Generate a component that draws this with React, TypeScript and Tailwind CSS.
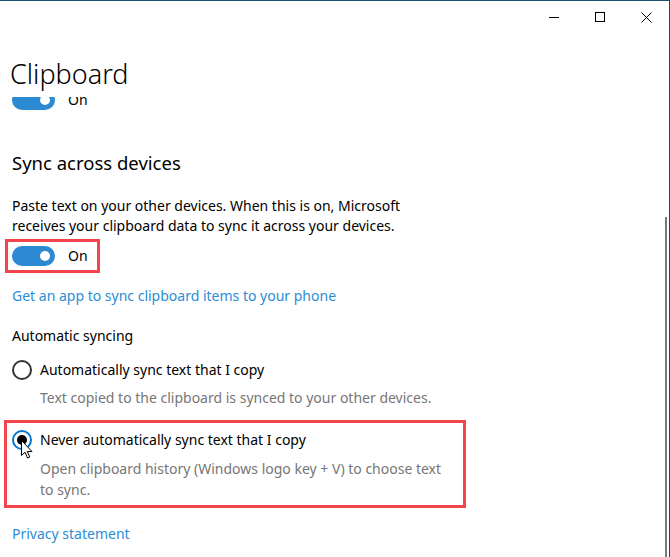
import React from 'react';

const font = { fontFamily: '"Noto Sans", "Open Sans", sans-serif' };

const Toggle = () => (
  <div className="flex h-[20px] items-center">
    <div className="flex h-[20px] w-[43px] items-center justify-end rounded-full bg-[#2b8ad2] pr-[5px]">
      <div className="h-[10px] w-[10px] rounded-full bg-white" />
    </div>
    <span className="ml-[13px] text-[14px] leading-[20px] text-black">On</span>
  </div>
);

const Radio = ({ checked }: { checked?: boolean }) =>
  checked ? (
    <div className="flex h-[20px] w-[20px] shrink-0 items-center justify-center rounded-full border-2 border-[#0078d7]">
      <div className="h-[10px] w-[10px] rounded-full bg-black" />
    </div>
  ) : (
    <div className="h-[20px] w-[20px] shrink-0 rounded-full border-2 border-[#333333]" />
  );

const TitleButtons = () => (
  <div className="flex h-[32px] justify-end">
    <div className="flex w-[46px] items-center justify-center">
      <svg width="10" height="10" viewBox="0 0 10 10">
        <path d="M0 5.5h10" stroke="#000" strokeWidth="1" />
      </svg>
    </div>
    <div className="flex w-[46px] items-center justify-center">
      <svg width="10" height="10" viewBox="0 0 10 10">
        <rect x="0.5" y="0.5" width="9" height="9" fill="none" stroke="#000" strokeWidth="1" />
      </svg>
    </div>
    <div className="flex w-[46px] items-center justify-center">
      <svg width="11" height="11" viewBox="0 0 11 11">
        <path d="M0.5 0.5l10 10M10.5 0.5l-10 10" stroke="#000" strokeWidth="1" />
      </svg>
    </div>
  </div>
);

export default function App() {
  return (
    <div
      className="relative h-[557px] w-[670px] overflow-hidden border-t border-r border-[#1b4f72] bg-white"
      style={font}
    >
      <TitleButtons />

      <div className="h-[64px] pl-[10px] pt-[25px]">
        <h1 className="text-[27px] font-light leading-[32px] text-black">Clipboard</h1>
      </div>

      <div className="h-[460px] overflow-hidden px-[12px]">
        <div className="h-[13px] overflow-hidden">
          <div className="-mt-[7px]">
            <Toggle />
          </div>
        </div>

        <h2 className="mt-[39px] text-[18.5px] leading-[28px] text-black">Sync across devices</h2>

        <p className="mt-[19px] w-[420px] text-[14px] leading-[20px] text-black">
          Paste text on your other devices. When this is on, Microsoft receives your clipboard data to
          sync it across your devices.
        </p>

        <div className="relative mt-[10px] w-fit">
          <Toggle />
          <div className="absolute -left-[7px] -top-[7px] h-[34px] w-[95px] border-[3px] border-[#f2444a]" />
        </div>

        <div className="mt-[20px] text-[14px] leading-[20px] text-[#2b8dd4]">
          Get an app to sync clipboard items to your phone
        </div>

        <div className="mt-[20px] text-[14px] leading-[20px] text-black">Automatic syncing</div>

        <div className="mt-[14px] flex items-center gap-[8px]">
          <Radio />
          <span className="text-[14px] leading-[20px] text-black">Automatically sync text that I copy</span>
        </div>
        <div className="ml-[28px] mt-[8px] text-[14px] leading-[20px] text-[#767676]">
          Text copied to the clipboard is synced to your other devices.
        </div>

        <div className="relative mt-[22px]">
          <div className="flex items-center gap-[8px]">
            <Radio checked />
            <span className="text-[14px] leading-[20px] text-black">
              Never automatically sync text that I copy
            </span>
          </div>
          <div className="ml-[28px] mt-[8px] w-[412px] text-[14px] leading-[21px] text-[#767676]">
            Open clipboard history (Windows logo key + V) to choose text to sync.
          </div>
          <div className="absolute -left-[8px] -top-[10px] h-[88px] w-[462px] border-[3px] border-[#f2444a]" />
          <svg
            className="absolute left-[9px] top-[10px]"
            width="13"
            height="19"
            viewBox="0 0 13 19"
          >
            <path
              d="M0.5 0.5 L0.5 15.5 L4 12.3 L6.6 18 L8.8 17 L6.3 11.5 L11 11.5 Z"
              fill="#fff"
              stroke="#000"
              strokeWidth="1"
              strokeLinejoin="miter"
            />
          </svg>
        </div>

        <div className="mt-[24px] text-[14px] leading-[20px] text-[#2b8dd4]">Privacy statement</div>
      </div>

      <div className="absolute bottom-0 left-[665px] top-[216px] w-[2px] bg-[#7a7a7a]" />
    </div>
  );
}
